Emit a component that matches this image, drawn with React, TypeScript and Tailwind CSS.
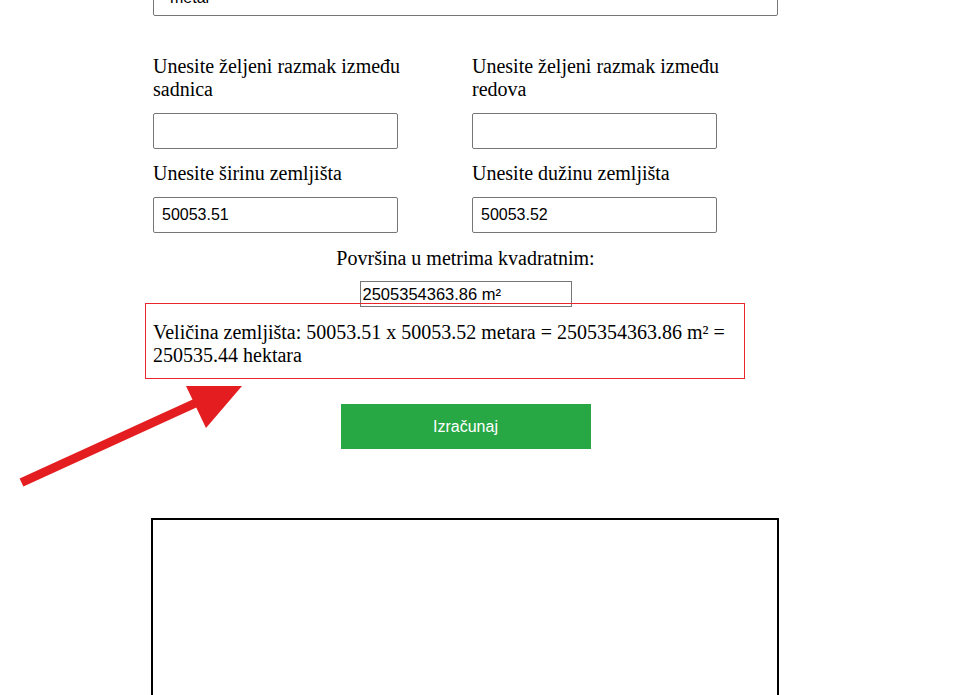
import React, { useState } from 'react';

const serif = "font-['Liberation_Serif',serif]";
const sans = "font-['Liberation_Sans',Arial,sans-serif]";

interface FieldProps {
  label: string;
  value: string;
  onChange: (v: string) => void;
}

const Field: React.FC<FieldProps> = ({ label, value, onChange }) => (
  <div className="flex flex-col w-[300px]">
    <label className={`${serif} text-[20px] leading-[23px] text-black mb-[12px]`}>{label}</label>
    <input
      type="text"
      value={value}
      onChange={(e) => onChange(e.target.value)}
      className={`${sans} w-[245px] h-[36px] px-2 text-[16px] text-black border border-[#767676] rounded-[2px] outline-none bg-white`}
    />
  </div>
);

export default function App() {
  const [spacingPlants, setSpacingPlants] = useState('');
  const [spacingRows, setSpacingRows] = useState('');
  const [width, setWidth] = useState('50053.51');
  const [length, setLength] = useState('50053.52');

  const w = parseFloat(width) || 0;
  const l = parseFloat(length) || 0;
  const area = (w * l).toFixed(2);
  const hectares = ((w * l) / 10000).toFixed(2);

  return (
    <div className="relative flex flex-col min-h-[695px] bg-white overflow-hidden">
      <div className="flex flex-col ml-[153px] w-[625px]">
        {/* plant type (scrolled off the top) */}
        <input
          type="text"
          defaultValue="metal"
          className={`${sans} -mt-[20px] w-[625px] h-[36px] pl-[16px] text-[16px] text-black border border-[#767676] rounded-[2px] outline-none`}
        />

        <div className="mt-[39px] flex gap-[19px]">
          <Field label="Unesite željeni razmak između sadnica" value={spacingPlants} onChange={setSpacingPlants} />
          <Field label="Unesite željeni razmak između redova" value={spacingRows} onChange={setSpacingRows} />
        </div>

        <div className="mt-[13px] flex gap-[19px]">
          <Field label="Unesite širinu zemljišta" value={width} onChange={setWidth} />
          <Field label="Unesite dužinu zemljišta" value={length} onChange={setLength} />
        </div>

        <p className={`${serif} mt-[14px] text-center text-[20px] leading-[23px] text-black`}>
          Površina u metrima kvadratnim:
        </p>

        <div className="mt-[11px] flex justify-center">
          <input
            type="text"
            readOnly
            value={`${area} m²`}
            className={`${sans} w-[212px] h-[26px] pl-[2px] text-[16.5px] text-black border border-[#767676] outline-none`}
          />
        </div>

        <div className="relative mt-[14px]">
          <p className={`${serif} text-[20px] leading-[23px] text-black`}>
            Veličina zemljišta: {width} x {length} metara = {area} m² = {hectares} hektara
          </p>
          {/* annotation box */}
          <div className="absolute -left-[8px] -top-[18px] w-[600px] h-[76px] border border-[#e8262b] pointer-events-none" />
        </div>

        <div className="mt-[37px] flex justify-center">
          <button className={`${sans} w-[250px] h-[45px] bg-[#28a745] text-white text-[16px]`}>
            Izračunaj
          </button>
        </div>

        <div className="mt-[69px] -ml-[2px] w-[628px] h-[300px] border-2 border-black bg-white" />
      </div>

      {/* annotation arrow */}
      <svg
        className="absolute left-0 top-[375px] pointer-events-none"
        width="260"
        height="120"
        viewBox="0 375 260 120"
      >
        <line x1="21.5" y1="482.5" x2="200" y2="401" stroke="#e41e20" strokeWidth="9" />
        <polygon points="186,386 242,386 206,428" fill="#e41e20" />
      </svg>
    </div>
  );
}
